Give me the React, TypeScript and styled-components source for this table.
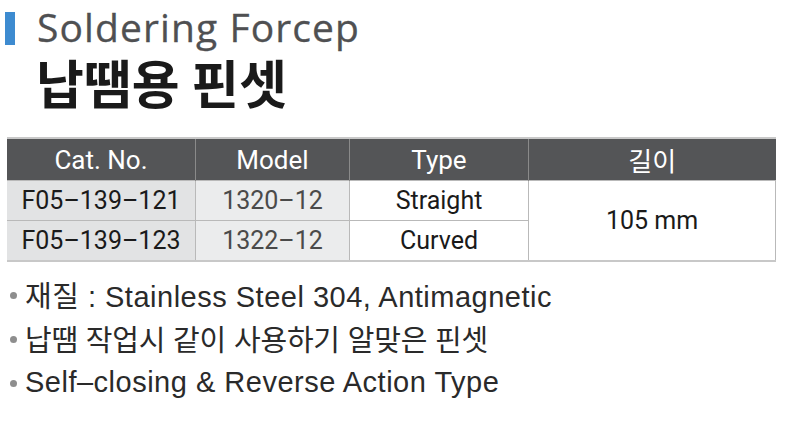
import styled, { createGlobalStyle } from 'styled-components';

const GlobalStyle = createGlobalStyle`
  html, body {
    margin: 0;
    padding: 0;
    background: #ffffff;
  }
  body {
    font-family: "Liberation Sans", "Noto Sans CJK KR", sans-serif;
    width: 800px;
    height: 430px;
    overflow: hidden;
  }
`;

const rows = [
  { cat: 'F05–139–121', model: '1320–12', type: 'Straight' },
  { cat: 'F05–139–123', model: '1322–12', type: 'Curved' },
];

const bullets = [
  { text: '재질 : Stainless Steel 304, Antimagnetic', tracking: 0.5 },
  { text: '납땜 작업시 같이 사용하기 알맞은 핀셋', tracking: -0.2 },
  { text: 'Self–closing & Reverse Action Type', tracking: 0.5 },
];

function App() {
  return (
    <Page>
      <GlobalStyle />
      <TitleRow>
        <Bar />
        <EnTitle>Soldering Forcep</EnTitle>
      </TitleRow>
      <KoTitle>납땜용 핀셋</KoTitle>

      <Table>
        <thead>
          <tr>
            <Th width={188}>Cat. No.</Th>
            <Th width={153}>Model</Th>
            <Th width={178}>Type</Th>
            <Th>길이</Th>
          </tr>
        </thead>
        <tbody>
          {rows.map((r, i) => (
            <tr key={r.cat}>
              <Td bg="#e2e3e4">{r.cat}</Td>
              <Td bg="#ebeced" muted>
                {r.model}
              </Td>
              <Td>{r.type}</Td>
              {i === 0 ? <Td rowSpan={2}>105 mm</Td> : null}
            </tr>
          ))}
        </tbody>
      </Table>

      <BulletList>
        {bullets.map((b) => (
          <Bullet key={b.text} tracking={b.tracking}>
            {b.text}
          </Bullet>
        ))}
      </BulletList>
    </Page>
  );
}
export default App;

const Page = styled.div`
  width: 800px;
  height: 430px;
  box-sizing: border-box;
  padding: 6px 0 0 5px;
`;

const TitleRow = styled.div`
  display: flex;
  align-items: flex-start;
  gap: 22px;
  height: 46px;
`;

const Bar = styled.div`
  width: 10px;
  height: 33px;
  margin-top: 6px;
  background: #3d8bd0;
  flex-shrink: 0;
`;

const EnTitle = styled.div`
  font-family: "Open Sans", "Noto Sans", sans-serif;
  font-size: 39px;
  line-height: 42px;
  color: #4f5052;
  letter-spacing: 1.1px;
  -webkit-text-stroke: 0.3px #4f5052;
`;

const KoTitle = styled.div`
  font-family: "Noto Sans CJK KR", sans-serif;
  font-weight: 700;
  font-size: 52px;
  line-height: 60px;
  color: #1a1a1a;
  padding-left: 31px;
`;

const Table = styled.table`
  margin-top: 25px;
  margin-left: 2px;
  width: 769px;
  border-collapse: collapse;
  border-top: 2px solid #c8c8c8;
  border-bottom: 2px solid #c8c8c8;
  font-family: Roboto, "Noto Sans CJK KR", sans-serif;
  font-size: 25px;
`;

const Th = styled.th<{ width?: number }>`
  width: ${(p) => (p.width ? `${p.width}px` : 'auto')};
  height: 41px;
  padding: 0;
  background: #545557;
  color: #ffffff;
  font-size: 26px;
  font-weight: 400;
  border-left: 1px solid #8a8a8a;
  &:first-child {
    border-left: none;
  }
`;

const Td = styled.td<{ bg?: string; muted?: boolean }>`
  height: 39px;
  padding: 0;
  text-align: center;
  background: ${(p) => p.bg || '#ffffff'};
  color: ${(p) => (p.muted ? '#4a4a4a' : '#1a1a1a')};
  border: 1px solid #b9b9b9;
  &:first-child {
    border-left: none;
  }
`;

const BulletList = styled.ul`
  list-style: none;
  margin: 10px 0 0 0;
  padding: 0;
`;

const Bullet = styled.li<{ tracking: number }>`
  display: flex;
  align-items: center;
  height: 44px;
  font-size: 29px;
  letter-spacing: ${(p) => p.tracking}px;
  color: #2a2a2a;
  &::before {
    content: '';
    width: 7px;
    height: 7px;
    border-radius: 50%;
    background: #8e8e8e;
    margin: 2px 8px 0 5px;
    flex-shrink: 0;
  }
`;
